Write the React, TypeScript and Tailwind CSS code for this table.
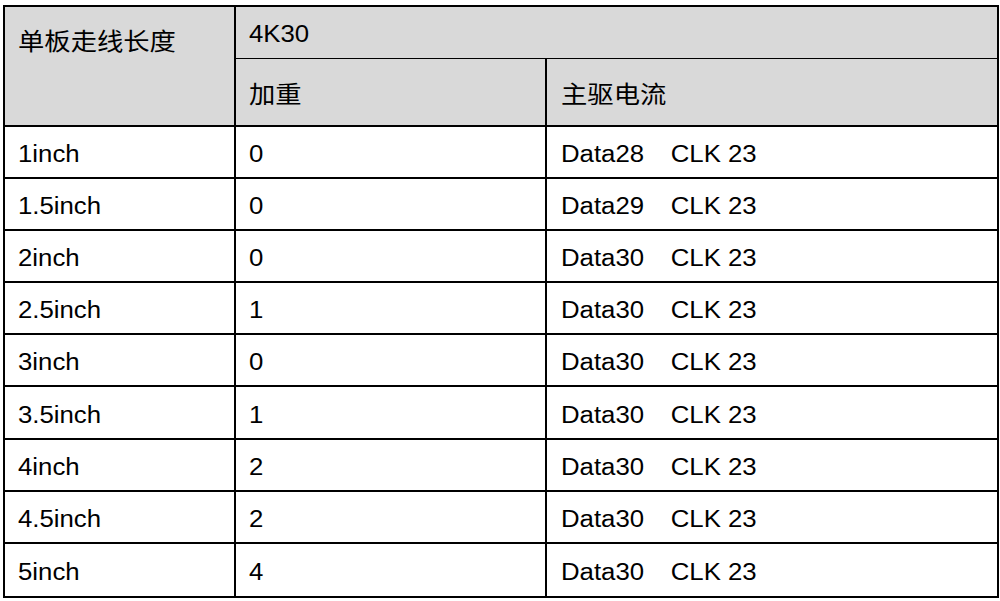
import React from "react";

const rows: [string, string, string][] = [
  ["1inch", "0", "Data28"],
  ["1.5inch", "0", "Data29"],
  ["2inch", "0", "Data30"],
  ["2.5inch", "1", "Data30"],
  ["3inch", "0", "Data30"],
  ["3.5inch", "1", "Data30"],
  ["4inch", "2", "Data30"],
  ["4.5inch", "2", "Data30"],
  ["5inch", "4", "Data30"],
];

function T({ children }: { children: React.ReactNode }) {
  return (
    <span className="inline-block origin-left scale-x-[1.12] whitespace-nowrap">
      {children}
    </span>
  );
}

export default function App() {
  return (
    <div
      className="w-[1000px] h-[601px] bg-white pt-[5px] pl-[3px] text-black text-[23px] leading-[26px]"
      style={{ fontFamily: '"Liberation Sans", Arial, "Noto Sans CJK SC", sans-serif' }}
    >
      <div className="w-[996px] border-2 border-black">
        <div className="flex bg-[#d9d9d9] border-b-2 border-black">
          <div className="w-[231px] h-[118px] border-r-2 border-black pl-[13px] pt-[22px] text-[23.5px]">
            <T>单板走线长度</T>
          </div>
          <div className="flex-1 flex flex-col">
            <div className="h-[52px] border-b border-black pl-[13px] flex items-center pt-[3px]">
              <T>4K30</T>
            </div>
            <div className="flex h-[66px] text-[23.5px]">
              <div className="w-[311px] border-r-2 border-black pl-[13px] flex items-center pt-[5px]">
                <T>加重</T>
              </div>
              <div className="flex-1 pl-[14px] flex items-center pt-[5px]">
                <T>主驱电流</T>
              </div>
            </div>
          </div>
        </div>
        {rows.map((r, i) => (
          <div
            key={i}
            className={
              "flex h-[52.1px] " + (i < rows.length - 1 ? "border-b-2 border-black" : "")
            }
          >
            <div className="w-[231px] border-r-2 border-black pl-[13px] flex items-center pt-[4px]">
              <T>{r[0]}</T>
            </div>
            <div className="w-[311px] border-r-2 border-black pl-[13px] flex items-center pt-[4px]">
              <T>{r[1]}</T>
            </div>
            <div className="flex-1 pl-[14px] flex items-center pt-[4px]">
              <T>
                <span className="inline-block w-[98px]">{r[2]}</span>CLK 23
              </T>
            </div>
          </div>
        ))}
      </div>
    </div>
  );
}
